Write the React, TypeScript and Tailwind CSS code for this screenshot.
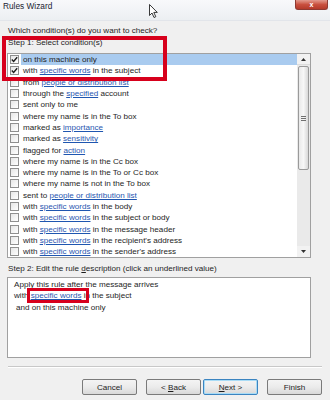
import React from "react";

type Seg = { t: string; link?: boolean };

const conditions: Seg[][] = [
  [{ t: "on this machine only" }],
  [{ t: "with " }, { t: "specific words", link: true }, { t: " in the subject" }],
  [{ t: "from " }, { t: "people or distribution list", link: true }],
  [{ t: "through the " }, { t: "specified", link: true }, { t: " account" }],
  [{ t: "sent only to me" }],
  [{ t: "where my name is in the To box" }],
  [{ t: "marked as " }, { t: "importance", link: true }],
  [{ t: "marked as " }, { t: "sensitivity", link: true }],
  [{ t: "flagged for " }, { t: "action", link: true }],
  [{ t: "where my name is in the Cc box" }],
  [{ t: "where my name is in the To or Cc box" }],
  [{ t: "where my name is not in the To box" }],
  [{ t: "sent to " }, { t: "people or distribution list", link: true }],
  [{ t: "with " }, { t: "specific words", link: true }, { t: " in the body" }],
  [{ t: "with " }, { t: "specific words", link: true }, { t: " in the subject or body" }],
  [{ t: "with " }, { t: "specific words", link: true }, { t: " in the message header" }],
  [{ t: "with " }, { t: "specific words", link: true }, { t: " in the recipient's address" }],
  [{ t: "with " }, { t: "specific words", link: true }, { t: " in the sender's address" }],
];

function Checkbox({ checked }: { checked?: boolean }) {
  return (
    <div className="flex h-[9px] w-[9px] shrink-0 items-center justify-center border border-[#8f8f8f] bg-gradient-to-br from-[#e6e6e6] to-white">
      {checked && (
        <svg width="7" height="7" viewBox="0 0 7 7">
          <path d="M0.8 3.6 L2.6 5.4 L6.2 1.2" fill="none" stroke="#1b1b1b" strokeWidth="1.4" />
        </svg>
      )}
    </div>
  );
}

function Text({ segs }: { segs: Seg[] }) {
  return (
    <span>
      {segs.map((s, i) =>
        s.link ? (
          <span key={i} className="text-[#1f56b0] underline decoration-[0.7px] underline-offset-[1px]">
            {s.t}
          </span>
        ) : (
          <span key={i}>{s.t}</span>
        )
      )}
    </span>
  );
}

function Button({ children, focused }: { children: React.ReactNode; focused?: boolean }) {
  return (
    <div
      className={`flex h-[16px] w-[55px] items-center justify-center rounded-[2px] border bg-gradient-to-b from-[#f4f4f4] via-[#ebebeb] to-[#d9d9d9] ${
        focused ? "border-[#3b84c0] shadow-[inset_0_0_0_1px_#a9dcf6]" : "border-[#7a7a7a]"
      }`}
    >
      <span>{children}</span>
    </div>
  );
}

export default function App() {
  return (
    <div className="relative h-[400px] w-[330px] overflow-hidden bg-[#f0f0f0] font-['Liberation_Sans',Arial,sans-serif] text-[8.1px] leading-[11px] text-[#1e1e1e]">
      {/* title bar */}
      <div className="flex h-[21px] items-start border-b border-[#e2e5ea] bg-gradient-to-b from-[#f8f9fb] to-[#eceff2]">
        <span className="pl-[3px] pt-[1px] text-[8.3px] text-[#1a2332]">Rules Wizard</span>
        <div className="ml-auto mr-[2px] flex h-[10px] w-[33px] items-center justify-center rounded-b-[3px] border border-t-0 border-[#8e3a32] bg-gradient-to-b from-[#e29a8e] via-[#c9503f] to-[#b43a2a]">
          <span className="text-[7px] font-bold leading-none text-white">x</span>
        </div>
      </div>

      <div className="px-[7px]">
        <div className="mt-[4px] pl-[1px]">Which condition(s) do you want to check?</div>
        <div className="mt-[1px] pl-[1px]">Step 1: Select condition(s)</div>

        {/* conditions list */}
        <div className="mt-[5px] flex h-[205px] w-[304px] border border-[#a0a0a0] bg-white">
          <div className="flex-1 overflow-hidden">
            {conditions.map((segs, i) => (
              <div key={i} className="flex h-[11.3px] items-center whitespace-nowrap">
                <div className="ml-[2px]">
                  <Checkbox checked={i < 2} />
                </div>
                <div className={`ml-[2px] flex h-full flex-1 items-center pl-[2px] ${i === 0 ? "bg-[#a9cbef]" : ""}`}>
                  <Text segs={segs} />
                </div>
              </div>
            ))}
          </div>
          {/* scrollbar */}
          <div className="flex w-[13px] flex-col bg-[#eaeaea]">
            <div className="flex h-[11px] items-center justify-center border-b border-[#dcdcdc] bg-[#f2f2f2]">
              <svg width="5" height="3" viewBox="0 0 5 3">
                <path d="M0 3 L2.5 0 L5 3 Z" fill="#303030" />
              </svg>
            </div>
            <div className="mx-[1px] mt-[1px] flex h-[104px] items-center justify-center rounded-[2px] border border-[#9a9a9a] bg-gradient-to-r from-[#e9e9e9] via-[#f7f7f7] to-[#d8d8d8]">
              <div className="flex flex-col gap-[1px]">
                <div className="h-[1px] w-[5px] bg-[#707070]" />
                <div className="h-[1px] w-[5px] bg-[#707070]" />
                <div className="h-[1px] w-[5px] bg-[#707070]" />
              </div>
            </div>
            <div className="flex-1" />
            <div className="flex h-[11px] items-center justify-center bg-[#f2f2f2]">
              <svg width="5" height="3" viewBox="0 0 5 3">
                <path d="M0 0 L2.5 3 L5 0 Z" fill="#303030" />
              </svg>
            </div>
          </div>
        </div>

        <div className="mt-[5px] pl-[1px]">
          Step 2: Edit the rule <span className="underline decoration-[0.7px]">d</span>escription (click an underlined value)
        </div>

        {/* description box */}
        <div className="relative mt-[3px] h-[81px] w-[304px] border border-[#a0a0a0] bg-white pl-[6px] pt-[1px] leading-[11.4px]">
          <div>Apply this rule after the message arrives</div>
          <div>
            with <Text segs={[{ t: "specific words", link: true }]} /> in the subject
          </div>
          <div className="pl-[2px]">and on this machine only</div>
          {/* red highlight */}
          <div className="absolute left-[19px] top-[10px] h-[15px] w-[62px] border-[3px] border-[#d7001c]" />
        </div>

        {/* separator */}
        <div className="ml-[1px] mt-[8px] h-[2px] w-[314px] border-t border-b border-t-[#c8c8c8] border-b-white" />

        {/* buttons */}
        <div className="mt-[11px] flex w-[315px] justify-end">
          <Button>Cancel</Button>
          <div className="ml-[9px]">
            <Button>
              &lt;&nbsp;<span className="underline decoration-[0.7px]">B</span>ack
            </Button>
          </div>
          <div className="ml-[2px]">
            <Button focused>
              <span className="underline decoration-[0.7px]">N</span>ext &gt;
            </Button>
          </div>
          <div className="ml-[9px]">
            <Button>Finish</Button>
          </div>
        </div>
      </div>

      {/* red highlight around step 1 */}
      <div className="absolute left-[2px] top-[36px] h-[45px] w-[165px] border-[4px] border-[#d7001c]" />

      {/* mouse cursor */}
      <svg className="absolute left-[149px] top-[4px]" width="10" height="15" viewBox="0 0 10 15">
        <path d="M0.5 0.5 L0.5 11.5 L3 9 L5 13.5 L6.8 12.7 L4.8 8.4 L8.3 8.4 Z" fill="white" stroke="#222" strokeWidth="0.9" strokeLinejoin="round" />
      </svg>
    </div>
  );
}
